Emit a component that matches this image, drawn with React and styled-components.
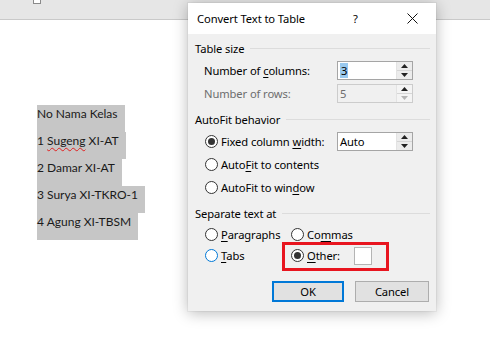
import styled, { createGlobalStyle } from 'styled-components';

const GlobalStyle = createGlobalStyle`
  html, body {
    margin: 0;
    padding: 0;
    background: #ffffff;
  }
  body {
    width: 490px;
    height: 351px;
    overflow: hidden;
    font-family: 'Noto Sans', 'Liberation Sans', sans-serif;
  }
`;

const lines = ['No Nama Kelas', '1 Sugeng XI-AT', '2 Damar XI-AT', '3 Surya XI-TKRO-1', '4 Agung XI-TBSM'];

const Page = styled.div`
  position: relative;
  width: 490px;
  height: 351px;
  background: #ffffff;
`;

const Ribbon = styled.div`
  height: 19px;
  background: #e6e6e6;
  border-bottom: 1px solid #c9c9c9;
  padding-left: 33px;
`;

const RibbonBox = styled.div`
  width: 6px;
  height: 3px;
  background: #ffffff;
  border: 1px solid #8a8a8a;
  border-top: none;
`;

const DocText = styled.div`
  display: flex;
  flex-direction: column;
  align-items: flex-start;
  margin: 85px 0 0 37px;
  font-family: Lato, 'Noto Sans', sans-serif;
  font-size: 12px;
  color: #1a1a1a;
`;

const Para = styled.div`
  background: #c6c6c6;
  height: 18px;
  line-height: 18px;
  padding: 0 7px 9px 0;
  white-space: pre;
`;

const Misspelled = styled.span`
  text-decoration: underline wavy #e02020;
  text-decoration-thickness: 1px;
  text-underline-offset: 2px;
`;

const Dialog = styled.div`
  position: absolute;
  left: 188px;
  top: 3px;
  width: 248px;
  height: 308px;
  background: #f0f0f0;
  box-shadow: 0 2px 14px rgba(0, 0, 0, 0.28), 0 0 0 1px rgba(0, 0, 0, 0.04);
  display: flex;
  flex-direction: column;
  font-size: 11.2px;
  letter-spacing: -0.1px;
  color: #000;
`;

const TitleBar = styled.div`
  height: 31px;
  background: #ffffff;
  display: flex;
  align-items: center;
  padding-left: 9px;
`;

const Title = styled.div`
  flex: 1;
  margin-top: -1px;
`;

const Help = styled.div`
  width: 20px;
  margin-right: 28px;
`;

const Close = styled.div`
  width: 23px;
  display: flex;
  justify-content: center;
  margin-right: 12px;
`;

const Body = styled.div`
  flex: 1;
  display: flex;
  flex-direction: column;
  padding: 4px 6px 9px 7px;
`;

const Heading = styled.div`
  display: flex;
  align-items: center;
  height: ${(p) => p.$h || 21}px;
  margin-top: ${(p) => p.$mt || 0}px;
  gap: 6px;
  &::after {
    content: '';
    flex: 1;
    height: 1px;
    background: #dcdcdc;
  }
`;

const FieldRow = styled.div`
  display: flex;
  align-items: center;
  height: 23px;
  padding-left: 9px;
`;

const Label = styled.div`
  width: 133px;
  color: ${(p) => (p.$disabled ? '#6d6d6d' : '#000')};
`;

const Spin = styled.div`
  width: 76px;
  height: 19px;
  box-sizing: border-box;
  border: 1px solid ${(p) => (p.$disabled ? '#cccccc' : '#a5a5a5')};
  background: ${(p) => (p.$disabled ? '#f0f0f0' : '#ffffff')};
  display: flex;
`;

const SpinValue = styled.div`
  flex: 1;
  display: flex;
  align-items: center;
  padding-left: 2px;
  color: ${(p) => (p.$disabled ? '#6d6d6d' : '#000')};
`;

const Selected = styled.span`
  background: #99c9ef;
  padding: 0 1px;
  line-height: 15px;
`;

const SpinButtons = styled.div`
  width: 15px;
  display: flex;
  flex-direction: column;
  border-left: 1px solid #e3e3e3;
`;

const SpinButton = styled.div`
  flex: 1;
  display: flex;
  align-items: center;
  justify-content: center;
  background: ${(p) => (p.$disabled ? '#f4f4f4' : '#ececec')};
  & + & {
    border-top: 1px solid #d6d6d6;
  }
`;

const Arrow = ({ up, color }) => (
  <svg width="7" height="4" viewBox="0 0 7 4">
    <path d={up ? 'M0 4 L3.5 0 L7 4 Z' : 'M0 0 L7 0 L3.5 4 Z'} fill={color} />
  </svg>
);

const RadioRow = styled.div`
  display: flex;
  align-items: center;
  height: 23px;
  padding-left: 10px;
`;

const Option = styled.div`
  display: flex;
  align-items: center;
  gap: 3px;
  width: ${(p) => p.$w || 'auto'};
  position: relative;
`;

const Circle = styled.div`
  flex: none;
  width: 13px;
  height: 13px;
  box-sizing: border-box;
  border-radius: 50%;
  border: 1px solid ${(p) => (p.$focus ? '#0078d7' : '#333333')};
  background: #ffffff;
  display: flex;
  align-items: center;
  justify-content: center;
  &::after {
    content: '';
    display: ${(p) => (p.$checked ? 'block' : 'none')};
    width: 7px;
    height: 7px;
    border-radius: 50%;
    background: #333333;
  }
`;

const Key = styled.span`
  text-decoration: underline;
  text-underline-offset: 2px;
`;

const OptionGrid = styled.div`
  display: grid;
  grid-template-columns: 86px auto;
  grid-auto-rows: 21px;
  align-items: center;
  padding-left: 10px;
`;

const SmallBox = styled.div`
  width: 18px;
  height: 18px;
  box-sizing: border-box;
  border: 1px solid #b4b4b4;
  background: #ffffff;
  margin-left: 11px;
`;

const Highlight = styled.div`
  position: absolute;
  left: -9px;
  top: 50%;
  margin-top: -13.5px;
  width: 107px;
  height: 29px;
  box-sizing: border-box;
  border: 3px solid #e8151f;
  pointer-events: none;
`;

const Buttons = styled.div`
  display: flex;
  justify-content: flex-end;
  gap: 11px;
  margin-top: 15px;
  padding-right: 1px;
`;

const Button = styled.div`
  width: ${(p) => p.$w}px;
  height: 21px;
  box-sizing: border-box;
  display: flex;
  align-items: center;
  justify-content: center;
  background: #e1e1e1;
  border: ${(p) => (p.$default ? '2px solid #0078d7' : '1px solid #adadad')};
`;

const Radio = ({ checked, focus, w, children }) => (
  <Option $w={w}>
    <Circle $checked={checked} $focus={focus} />
    <span>{children}</span>
  </Option>
);

export default function App() {
  return (
    <Page>
      <GlobalStyle />
      <Ribbon>
        <RibbonBox />
      </Ribbon>
      <DocText>
        {lines.map((l, i) =>
          i === 1 ? (
            <Para key={i}>
              1 <Misspelled>Sugeng</Misspelled> XI-AT
            </Para>
          ) : (
            <Para key={i}>{l}</Para>
          )
        )}
      </DocText>

      <Dialog>
        <TitleBar>
          <Title>Convert Text to Table</Title>
          <Help>?</Help>
          <Close>
            <svg width="11" height="11" viewBox="0 0 11 11">
              <path d="M0.5 0.5 L10.5 10.5 M10.5 0.5 L0.5 10.5" stroke="#111" strokeWidth="1" />
            </svg>
          </Close>
        </TitleBar>
        <Body>
          <Heading>Table size</Heading>
          <FieldRow>
            <Label>
              Number of <Key>c</Key>olumns:
            </Label>
            <Spin>
              <SpinValue>
                <Selected>3</Selected>
              </SpinValue>
              <SpinButtons>
                <SpinButton>
                  <Arrow up color="#222" />
                </SpinButton>
                <SpinButton>
                  <Arrow color="#222" />
                </SpinButton>
              </SpinButtons>
            </Spin>
          </FieldRow>
          <FieldRow>
            <Label $disabled>Number of rows:</Label>
            <Spin $disabled>
              <SpinValue $disabled>5</SpinValue>
              <SpinButtons>
                <SpinButton $disabled>
                  <Arrow up color="#222" />
                </SpinButton>
                <SpinButton $disabled>
                  <Arrow color="#b5b5b5" />
                </SpinButton>
              </SpinButtons>
            </Spin>
          </FieldRow>

          <Heading $mt={3} $h={22}>AutoFit behavior</Heading>
          <RadioRow>
            <Radio checked w="132px">
              Fixed column <Key>w</Key>idth:
            </Radio>
            <Spin>
              <SpinValue>Auto</SpinValue>
              <SpinButtons>
                <SpinButton>
                  <Arrow up color="#222" />
                </SpinButton>
                <SpinButton>
                  <Arrow color="#222" />
                </SpinButton>
              </SpinButtons>
            </Spin>
          </RadioRow>
          <RadioRow>
            <Radio>
              Auto<Key>F</Key>it to contents
            </Radio>
          </RadioRow>
          <RadioRow>
            <Radio>
              AutoFit to win<Key>d</Key>ow
            </Radio>
          </RadioRow>

          <Heading $mt={3} $h={22}>Separate text at</Heading>
          <OptionGrid>
            <Radio>
              <Key>P</Key>aragraphs
            </Radio>
            <Radio>
              Co<Key>m</Key>mas
            </Radio>
            <Radio focus>
              <Key>T</Key>abs
            </Radio>
            <Option>
              <Circle $checked />
              <span>
                <Key>O</Key>ther:
              </span>
              <SmallBox />
              <Highlight />
            </Option>
          </OptionGrid>

          <Buttons>
            <Button $w={72} $default>
              OK
            </Button>
            <Button $w={74}>Cancel</Button>
          </Buttons>
        </Body>
      </Dialog>
    </Page>
  );
}
